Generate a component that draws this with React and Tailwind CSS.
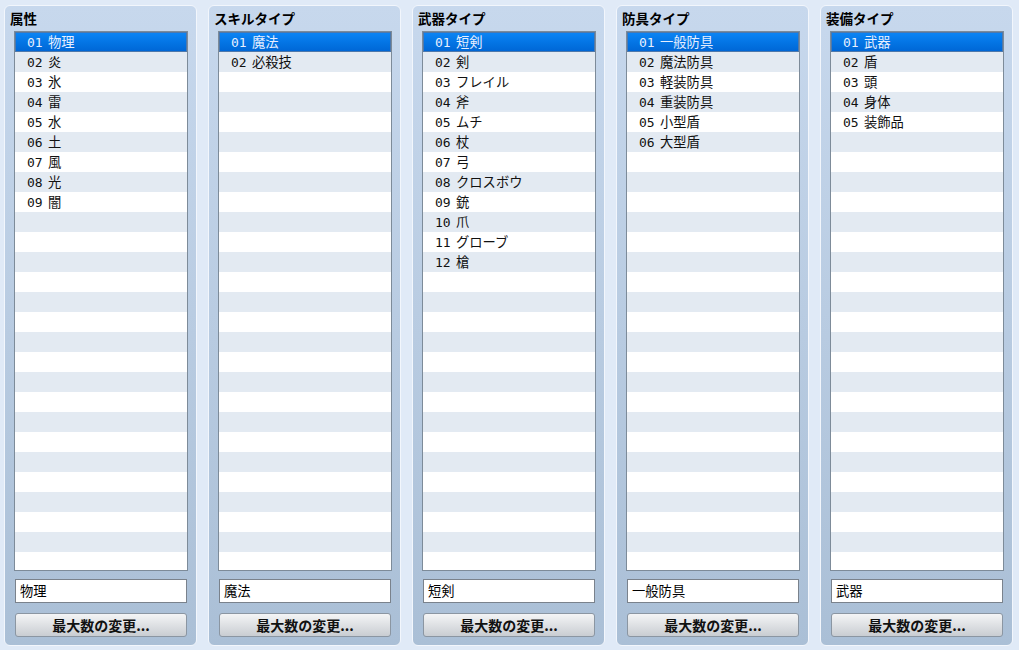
import React from "react";

const panels = [
  { title: "属性", items: ["物理", "炎", "氷", "雷", "水", "土", "風", "光", "闇"] },
  { title: "スキルタイプ", items: ["魔法", "必殺技"] },
  {
    title: "武器タイプ",
    items: ["短剣", "剣", "フレイル", "斧", "ムチ", "杖", "弓", "クロスボウ", "銃", "爪", "グローブ", "槍"],
  },
  { title: "防具タイプ", items: ["一般防具", "魔法防具", "軽装防具", "重装防具", "小型盾", "大型盾"] },
  { title: "装備タイプ", items: ["武器", "盾", "頭", "身体", "装飾品"] },
];

const ROWS = 27;

function Row({ index, label }) {
  const selected = index === 0;
  const num = label ? String(index + 1).padStart(2, "0") : "";
  const base = selected
    ? "bg-gradient-to-b from-[#0b84f4] to-[#0067d6] border border-[#4e78ab] text-[#e6efff]"
    : index % 2 === 1
      ? "bg-[#e3eaf2] text-[#111]"
      : "bg-white text-[#111]";
  return (
    <div className={`h-[20px] shrink-0 flex items-center text-[13px] leading-none ${base} ${selected ? "pl-[11px]" : "pl-[12px]"}`}>
      {label && (
        <>
          <span className="font-['DejaVu_Sans_Mono',monospace] w-[21px]">{num}</span>
          <span className="text-[13.3px] font-['Noto_Sans_CJK_JP',sans-serif]">{label}</span>
        </>
      )}
    </div>
  );
}

function Panel({ title, items }) {
  const rows = Array.from({ length: ROWS }, (_, i) => items[i] || "");
  return (
    <div className="w-[193px] h-[641px] shrink-0 flex flex-col rounded-[6px] border border-[#f2f6fc] bg-gradient-to-b from-[#c7d8ed] to-[#aabfd6] pl-[9px] pr-[8px] pb-[8px]">
      {/* title */}
      <div className="h-[25px] flex items-center -ml-[4px] font-bold text-[13.5px] text-black font-['Noto_Sans_CJK_JP',sans-serif]">
        {title}
      </div>
      {/* list */}
      <div className="h-[540px] border border-[#7d8b99] bg-white overflow-hidden flex flex-col">
        {rows.map((label, i) => (
          <Row key={i} index={i} label={label} />
        ))}
      </div>
      {/* name field */}
      <div className="mt-[8px] mx-[1px] h-[24px] border border-[#7a828c] bg-white flex items-center pl-[4px] text-[13.3px] text-black font-['Noto_Sans_CJK_JP',sans-serif]">
        {items[0]}
      </div>
      <button className="mt-[10px] mx-[1px] h-[24px] rounded-[3px] border border-[#8b96a2] bg-gradient-to-b from-[#f4f5f6] to-[#c9cdd2] flex items-center justify-center font-bold text-[14px] text-[#111] font-['Noto_Sans_CJK_JP',sans-serif]">
        最大数の変更...
      </button>
    </div>
  );
}

export default function App() {
  return (
    <div className="w-[1019px] h-[650px] bg-[#e0eaf7] flex gap-[11px] pl-[4px] pt-[5px] overflow-hidden">
      {panels.map((p) => (
        <Panel key={p.title} title={p.title} items={p.items} />
      ))}
    </div>
  );
}
